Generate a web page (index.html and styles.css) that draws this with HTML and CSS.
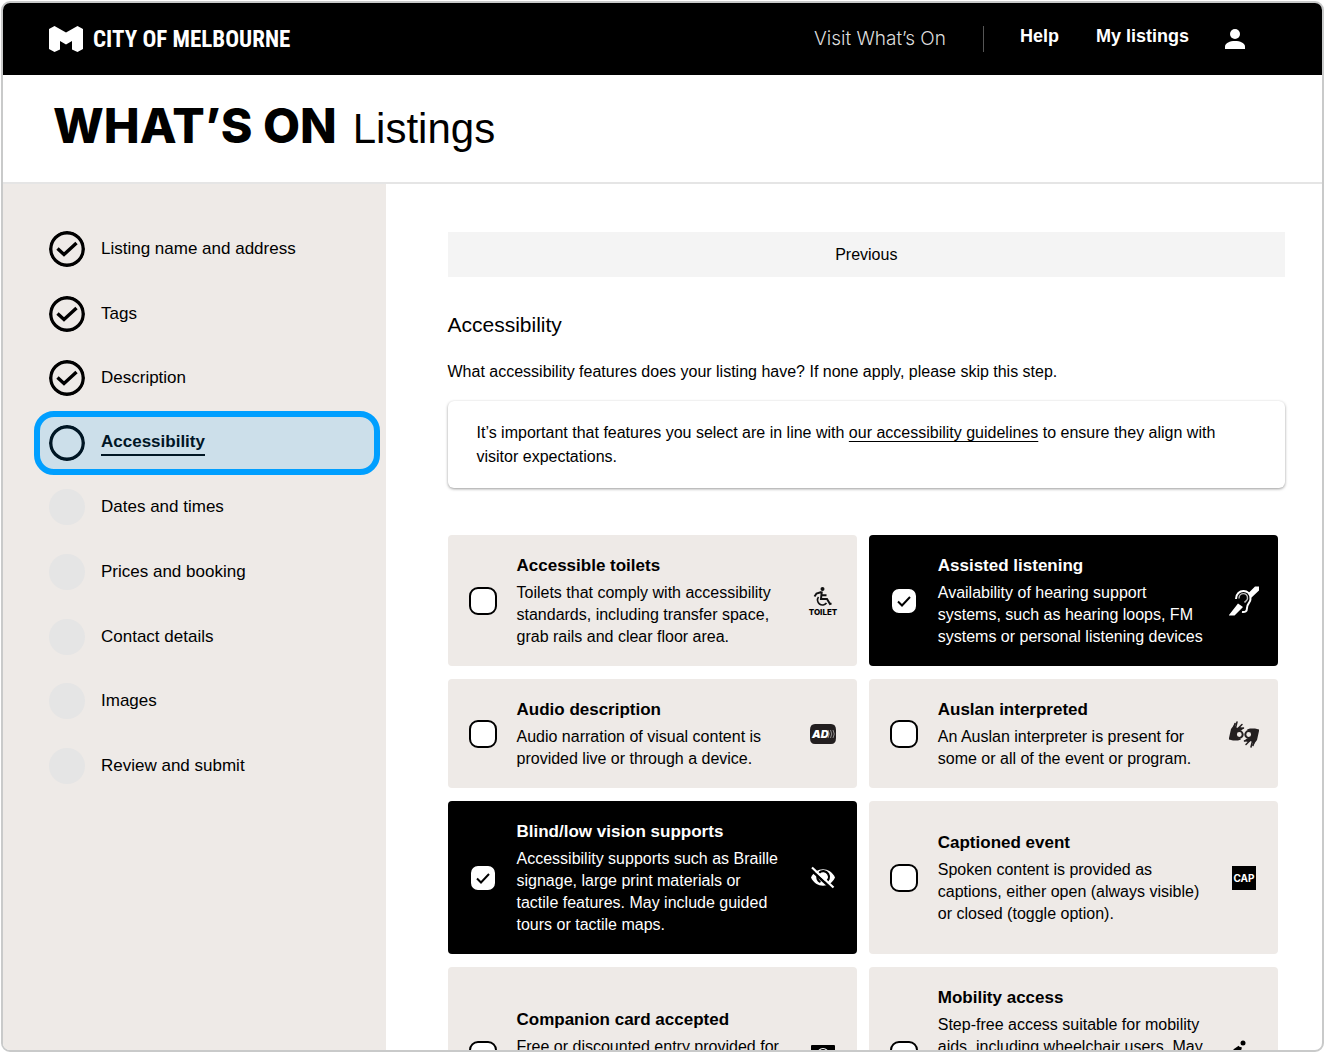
FILE: index.html
```html
<!DOCTYPE html>
<html lang="en">
<head>
    <meta charset="UTF-8">
    <meta name="viewport" content="width=device-width, initial-scale=1.0">
    <title>What's On Listings - Accessibility</title>
    <link rel="stylesheet" href="styles.css">
</head>
<body>
    <div class="frame">
        <header class="topbar">
            <a class="logo" href="#">
                <svg class="logo-mark" viewBox="0 0 34 26" aria-hidden="true">
                    <path d="M0 3 5.500 0 17 6.500 28.500 0 34 3V23L28.500 26 23 23.500V15L17 18.500 11 15V23.500L5.500 26 0 23Z" fill="#fff"/>
                </svg>
                <span class="logo-text">CITY OF MELBOURNE</span>
            </a>
            <nav class="topnav">
                <a class="visit-link" href="#">Visit What’s On</a>
                <div class="account-links">
                    <a href="#">Help</a>
                    <a href="#">My listings</a>
                </div>
                <a class="profile" href="#" aria-label="Profile">
                    <svg viewBox="0 0 20 20" width="20" height="20">
                        <circle cx="10" cy="5" r="5" fill="#fff"/>
                        <path d="M0 20v-2.500C0 14 5 12 10 12s10 2 10 5.500V20Z" fill="#fff"/>
                    </svg>
                </a>
            </nav>
        </header>

        <div class="brand">
            <span class="brand-name">WHAT’S ON</span>
            <span class="brand-section">Listings</span>
        </div>

        <div class="layout">
            <aside class="sidebar">
                <ul class="steps">
                    <li class="step done">
                        <svg class="marker" viewBox="0 0 36 36"><circle cx="18" cy="18" r="16.300"/><path d="m8.500 17.500 6.500 6L27.500 12"/></svg>
                        <a href="#">Listing name and address</a>
                    </li>
                    <li class="step done">
                        <svg class="marker" viewBox="0 0 36 36"><circle cx="18" cy="18" r="16.300"/><path d="m8.500 17.500 6.500 6L27.500 12"/></svg>
                        <a href="#">Tags</a>
                    </li>
                    <li class="step done">
                        <svg class="marker" viewBox="0 0 36 36"><circle cx="18" cy="18" r="16.300"/><path d="m8.500 17.500 6.500 6L27.500 12"/></svg>
                        <a href="#">Description</a>
                    </li>
                    <li class="step current">
                        <svg class="marker" viewBox="0 0 36 36"><circle cx="18" cy="18" r="16.300"/></svg>
                        <a href="#" aria-current="step">Accessibility</a>
                    </li>
                    <li class="step"><span class="marker"></span><a href="#">Dates and times</a></li>
                    <li class="step"><span class="marker"></span><a href="#">Prices and booking</a></li>
                    <li class="step"><span class="marker"></span><a href="#">Contact details</a></li>
                    <li class="step"><span class="marker"></span><a href="#">Images</a></li>
                    <li class="step"><span class="marker"></span><a href="#">Review and submit</a></li>
                </ul>
            </aside>

            <main class="content">
                <button class="previous" type="button">Previous</button>
                <h1>Accessibility</h1>
                <p class="intro">What accessibility features does your listing have? If none apply, please skip this step.</p>
                <div class="notice">
                    It’s important that features you select are in line with <a href="#">our accessibility guidelines</a> to ensure they align with visitor expectations.
                </div>

                <form class="features">
                    <label class="feature" for="toilets">
                        <input type="checkbox" id="toilets">
                        <span class="feature-text">
                            <strong>Accessible toilets</strong>
                            <span>Toilets that comply with accessibility standards, including transfer space, grab rails and clear floor area.</span>
                        </span>
                        <svg class="icon" viewBox="0 0 30 30">
                            <circle cx="14.500" cy="3" r="2" fill="#111"/>
                            <path d="M13.800 5.500 13 13h6l3 5 1.500-.7M13.500 9.200h5M13.500 6 8.500 7.500 6.500 10.500" fill="none" stroke="#111" stroke-width="2"/>
                            <path d="M10.500 11A5 5 0 1 0 18.500 17" fill="none" stroke="#111" stroke-width="1.600"/>
                            <text class="toilet-text" x="15" y="29" text-anchor="middle">TOILET</text>
                        </svg>
                    </label>

                    <label class="feature" for="listening">
                        <input type="checkbox" id="listening" checked>
                        <span class="feature-text">
                            <strong>Assisted listening</strong>
                            <span>Availability of hearing support systems, such as hearing loops, FM systems or personal listening devices</span>
                        </span>
                        <svg class="icon" viewBox="0 0 30 30">
                            <path d="M0 29 9 17.500l5 3.500-8.500 8.500H0ZM19.500 7 26 .5h4v4L22 12Z" fill="#fff"/>
                            <path d="M7 13C7 2.500 22 2 21.500 13c0 4-3.500 4.500-3.500 9 0 3.500-2 4.500-5 4" fill="none" stroke="#fff" stroke-width="2"/>
                            <path d="M10 12.500c0-6.500 9-6.500 8.500 0 0 2-2 2.500-3 4" fill="none" stroke="#bbb" stroke-width="1.400"/>
                        </svg>
                    </label>

                    <label class="feature" for="audio">
                        <input type="checkbox" id="audio">
                        <span class="feature-text">
                            <strong>Audio description</strong>
                            <span>Audio narration of visual content is provided live or through a device.</span>
                        </span>
                        <svg class="icon" viewBox="0 0 30 30">
                            <path d="M7 5h16q5 0 5 6v8q0 6-5 6H7q-5 0-5-6V11q0-6 5-6Z" fill="#231f20"/>
                            <text class="ad-text" x="4" y="19">AD</text>
                            <path d="M20 11q2.500 4 0 8M22.500 11q2.500 4 0 8M25 11q2.500 4 0 8" fill="none" stroke="#aaa" stroke-width=".8"/>
                        </svg>
                    </label>

                    <label class="feature" for="auslan">
                        <input type="checkbox" id="auslan">
                        <span class="feature-text">
                            <strong>Auslan interpreted</strong>
                            <span>An Auslan interpreter is present for some or all of the event or program.</span>
                        </span>
                        <svg class="icon" viewBox="0 0 30 30">
                            <g id="hand">
                                <path d="M0 19 2 10 5 6l3 3 3-1 4 1-3 2.500q-5 0-5 4t4 4l1 1-3 1H4l-4-1Z" fill="#231f20"/>
                                <path d="M4.500 9 6 4.500M6.500 9 8 3M9 9.500 13 5.500M10.500 10.500 14.500 9" fill="none" stroke="#231f20" stroke-width="1.500" stroke-linecap="round"/>
                                <circle cx="10.300" cy="15.500" r="3.400" fill="none" stroke="#231f20" stroke-width="2"/>
                            </g>
                            <use href="#hand" transform="rotate(180 15 15.500)"/>
                        </svg>
                    </label>

                    <label class="feature" for="vision">
                        <input type="checkbox" id="vision" checked>
                        <span class="feature-text">
                            <strong>Blind/low vision supports</strong>
                            <span>Accessibility supports such as Braille signage, large print materials or tactile features. May include guided tours or tactile maps.</span>
                        </span>
                        <svg class="icon" viewBox="0 0 30 30">
                            <path d="M3 14.500C8 3.500 22 3.500 27 14.500 22 25.500 8 25.500 3 14.500Z" fill="#fff"/>
                            <path d="M11 10a5.800 5.800 0 1 1 6 9.500M9.500 13a5.500 5.500 0 0 0 3 6" fill="none" stroke="#000" stroke-width="2.200"/>
                            <path d="m2 6 22 20" stroke="#000" stroke-width="2.600"/>
                            <path d="m4 4.500 21.500 20" stroke="#fff" stroke-width="2.200"/>
                        </svg>
                    </label>

                    <label class="feature" for="captioned">
                        <input type="checkbox" id="captioned">
                        <span class="feature-text">
                            <strong>Captioned event</strong>
                            <span>Spoken content is provided as captions, either open (always visible) or closed (toggle option).</span>
                        </span>
                        <svg class="icon" viewBox="0 0 30 30">
                            <path d="M3 3h24v24H3Z" fill="#000"/>
                            <text class="cap-text" x="15" y="19" text-anchor="middle">CAP</text>
                        </svg>
                    </label>

                    <label class="feature" for="companion">
                        <input type="checkbox" id="companion">
                        <span class="feature-text">
                            <strong>Companion card accepted</strong>
                            <span>Free or discounted entry provided for a companion assisting a person with disability.</span>
                        </span>
                        <svg class="icon" viewBox="0 0 30 30">
                            <rect x="3" y="5" width="24" height="18" rx="1" fill="#000"/>
                            <circle cx="15" cy="14" r="5.500" fill="none" stroke="#fff" stroke-width="1.200"/>
                            <circle cx="15" cy="14" r="2.500" fill="none" stroke="#fff"/>
                        </svg>
                    </label>

                    <label class="feature" for="mobility">
                        <input type="checkbox" id="mobility">
                        <span class="feature-text">
                            <strong>Mobility access</strong>
                            <span>Step-free access suitable for mobility aids, including wheelchair users. May include ramps, lifts, wide doorways, accessible seating areas and wheelchair charging.</span>
                        </span>
                        <svg class="icon" viewBox="0 0 30 30">
                            <circle cx="14" cy="3" r="2.500" fill="#000"/>
                            <path d="m11.500 7-2.500 9h8l3 8M10.500 7 6 10l-3 4" fill="none" stroke="#000" stroke-width="3"/>
                            <path d="M6 15a6 6 0 1 0 9 7" fill="none" stroke="#000" stroke-width="2"/>
                        </svg>
                    </label>
                </form>
            </main>
        </div>
    </div>
</body>
</html>
```
FILE: styles.css
```css
* {
    box-sizing: border-box;
}
body {
    margin: 0;
    padding: 1px;
    height: 100vh;
    font-family: "Liberation Sans", Arial, sans-serif;
    font-size: 16px;
    color: #000;
    background-color: #fff;
}
a {
    color: inherit;
    text-decoration: none;
}
.frame {
    display: flex;
    flex-direction: column;
    height: 100%;
    border: 2px solid #c9caca;
    border-radius: 9px;
    overflow: hidden;
}

/* Top bar */
.topbar {
    flex: none;
    display: flex;
    justify-content: space-between;
    align-items: center;
    height: 72px;
    padding: 0 77px 0 46px;
    background-color: #000;
    color: #fff;
}
.logo {
    display: flex;
    align-items: center;
    gap: 10px;
}
.logo-mark {
    width: 34px;
    height: 26px;
}
.logo-text {
    font-family: "Roboto Condensed", "Liberation Sans Narrow", "DejaVu Sans Condensed", sans-serif;
    font-size: 23px;
    font-weight: bold;
}
.topnav {
    display: flex;
    align-items: center;
    gap: 36px;
}
.visit-link {
    padding-right: 37px;
    border-right: 1px solid #555;
    line-height: 26px;
    font-family: Inter, sans-serif;
    font-size: 19px;
    font-weight: 300;
    color: #ddd;
}
.account-links {
    display: flex;
    gap: 37px;
    padding-bottom: 6px;
    font-size: 18px;
    font-weight: bold;
}
.profile {
    display: flex;
}

/* Brand bar */
.brand {
    flex: none;
    display: flex;
    align-items: baseline;
    gap: 16px;
    height: 109px;
    padding: 21px 50px;
    border-bottom: 2px solid #e5e5e5;
}
.brand-name {
    font-family: Inter, sans-serif;
    font-size: 48px;
    font-weight: 800;
}
.brand-section {
    font-size: 42px;
}

.layout {
    flex: 1;
    display: flex;
    min-height: 0;
}

/* Steps */
.sidebar {
    flex: none;
    width: 29%;
    padding: 33px 6px 0 31px;
    background-color: #eeeae7;
}
.steps {
    display: grid;
    grid-auto-rows: 1fr;
    height: 581px;
    margin: 0;
    padding: 0;
    list-style: none;
}
.step {
    display: flex;
    align-items: center;
    gap: 16px;
    padding-left: 15px;
    font-size: 17px;
}
.marker {
    flex: none;
    width: 36px;
    height: 36px;
    border-radius: 50%;
    background-color: #e5e5e5;
}
.done .marker,
.current .marker {
    background: none;
    fill: none;
    stroke: #000;
    stroke-width: 3.4;
}
.current {
    position: relative;
    font-weight: bold;
}
.current a {
    border-bottom: 2px solid #000;
    line-height: 24px;
}
.current::after {
    content: "";
    position: absolute;
    inset: 0;
    border: 6px solid #009fff;
    border-radius: 20px;
    background-color: rgba(0, 159, 255, 0.14);
    pointer-events: none;
}

/* Content */
.content {
    flex: 1;
    padding: 48px 37px 0 62px;
    overflow: hidden;
}
.previous {
    display: block;
    width: 100%;
    height: 45px;
    border: 0;
    background-color: #f4f4f4;
    font-family: inherit;
    font-size: 16px;
    color: #000;
}
h1 {
    margin: 36px 0 23px;
    font-size: 21px;
    font-weight: normal;
    line-height: 24px;
}
.intro {
    margin: 0 0 17px;
    line-height: 24px;
}
.notice {
    padding: 20px 29px 19px;
    border-radius: 6px;
    box-shadow: 0 1px 3px rgba(0, 0, 0, 0.4);
    line-height: 24px;
}
.notice a {
    text-decoration: underline;
    text-decoration-thickness: 1px;
    text-underline-offset: 3px;
}
.features {
    display: grid;
    grid-template-columns: 1fr 1fr;
    gap: 13px 12px;
    margin: 47px 7px 0 0;
}
.feature {
    display: flex;
    align-items: center;
    gap: 20px;
    padding: 19px 19px 18px 21px;
    border-radius: 4px;
    background-color: #eeeae7;
}
.feature:has(input:checked) {
    background-color: #000;
    color: #fff;
}
.feature input {
    flex: none;
    appearance: none;
    width: 28px;
    height: 28px;
    margin: 0;
    border: 2px solid #000;
    border-radius: 9px;
    background: #fff center / 16px no-repeat;
}
.feature input:checked {
    background-image: url("data:image/svg+xml,%3Csvg xmlns='http://www.w3.org/2000/svg' viewBox='0 0 16 16'%3E%3Cpath d='m2 8.500 4 4L14 4' fill='none' stroke='%23000' stroke-width='2'/%3E%3C/svg%3E");
}
.feature-text {
    flex: 1;
    display: flex;
    flex-direction: column;
    gap: 4px;
    padding-right: 4px;
    line-height: 22px;
}
.feature-text strong {
    font-size: 17px;
    line-height: 24px;
}
.icon {
    flex: none;
    width: 30px;
    height: 30px;
}
.toilet-text {
    font-family: Inter, sans-serif;
    font-size: 8px;
    font-weight: 800;
}
.ad-text {
    font-family: Inter, sans-serif;
    font-size: 11px;
    font-weight: 900;
    font-style: italic;
    fill: #fff;
}
.cap-text {
    font-family: Inter, sans-serif;
    font-size: 10px;
    font-weight: 700;
    fill: #fff;
}
```
